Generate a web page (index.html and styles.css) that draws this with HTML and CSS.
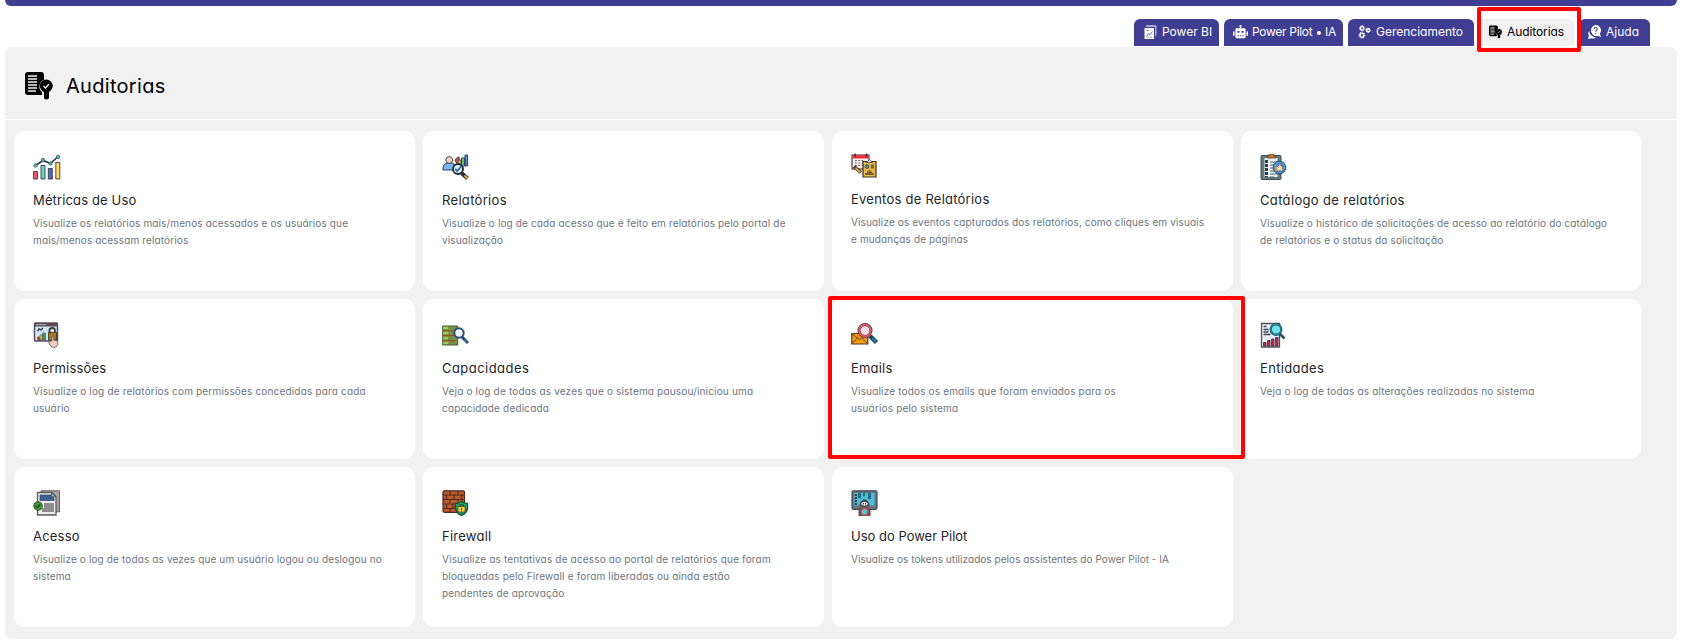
FILE: index.html
```html
<!DOCTYPE html>
<html lang="pt-BR">
<head>
<meta charset="utf-8">
<title>Auditorias</title>
<link rel="stylesheet" href="styles.css">
</head>
<body>
<svg class="defs" width="0" height="0">
  <symbol id="audit" viewBox="0 0 28 28">
    <path fill="currentColor" d="M3 0h13a3 3 0 0 1 3 3v5a7 7 0 0 0-2 12v3H3a3 3 0 0 1-3-3V3a3 3 0 0 1 3-3z"/>
    <path class="audit-lines" d="M3 4h9M3 7h9M3 10h9M3 13h9M3 16h9M3 19h8"/>
    <circle cx="21.3" cy="14" r="6.4" fill="currentColor"/>
    <path fill="currentColor" d="M19 18h5v7.500a2.500 2 0 0 1-5 0z"/>
    <path class="audit-lines" d="M18.500 14l2 2 3.500-4"/>
  </symbol>
</svg>
<header class="topbar"></header>
<nav class="tabs">
  <a class="tab t-bi"><svg class="ti" viewBox="0 0 12 14"><path fill="#a9a8d0" d="M2 0h9a1 1 0 0 1 1 1v9l-1.500 2V2H1z"/><path fill="#fff" d="M0 3h9.500v11H0z"/><path fill="none" stroke="#403e92" stroke-width=".8" d="M2 5.500h2M2 11.500l2-3 1.500 1 2.500-3M3 12.300h1M6 12.300h1.500"/></svg><span>Power BI</span></a>
  <a class="tab t-pilot"><svg class="ti wide" viewBox="0 0 14 13"><path fill="#fff" d="M6.300 1h1.400v2h2.800a1.300 1.300 0 0 1 1.300 1.300V11a1.300 1.300 0 0 1-1.300 1.300h-7A1.300 1.300 0 0 1 2.200 11V4.300A1.300 1.300 0 0 1 3.500 3h2.800zM0 6h1.400v4H0zM12.600 6H14v4h-1.400z"/><circle cx="7" cy="1" r="1" fill="#fff"/><path fill="#403e92" d="M4 5.500h2v1.800H4zM8 5.500h2v1.800H8zM4.200 9.500h1.300v.9H4.200zM6.400 9.500h1.300v.9H6.400zM8.600 9.500h1.300v.9H8.600z"/></svg><span>Power Pilot • IA</span></a>
  <a class="tab t-ger"><svg class="ti" viewBox="0 0 12 14"><g fill="none" stroke="#fff"><g stroke-width="1.400"><circle cx="3.600" cy="3.300" r="1.700"/><circle cx="9.600" cy="5.300" r="1.500"/><circle cx="3.400" cy="10.200" r="1.900"/></g><g stroke-width="1" stroke-dasharray="1 1"><circle cx="3.600" cy="3.300" r="2.700"/><circle cx="9.600" cy="5.300" r="2.200"/><circle cx="3.400" cy="10.200" r="3"/></g></g></svg><span>Gerenciamento</span></a>
  <a class="tab active t-aud"><svg class="ti"><use href="#audit"/></svg><span>Auditorias</span></a>
  <a class="tab t-aju"><svg class="ti" viewBox="0 0 12 13"><path fill="#fff" d="M7 0a5 5 0 0 1 4 8l1 3-3-.8A5 5 0 1 1 7 0z"/><path fill="#fff" d="M1.200 5.500A6 6 0 0 0 7.500 11.500 5 5 0 0 1 3 12.200L0 13l.8-3a4 4 0 0 1 .4-4.500z"/><path fill="none" stroke="#403e92" stroke-width="1" d="M5.600 3.800c0-2 3-2 3 0 0 1-1.500 1.200-1.500 2.400M7.100 7.200v1"/></svg><span>Ajuda</span></a>
  <span class="mark mark-tab"></span>
</nav>
<main class="panel">
  <div class="head"><svg class="head-icon"><use href="#audit"/></svg><h1>Auditorias</h1></div>
  <section class="grid">
    <article class="card">
      <svg class="icon" viewBox="0 0 28 26"><g stroke="#3b3a48" stroke-width=".9"><path fill="#e9566d" d="M.5 17.500h4v7.500h-4z"/><path fill="#6fd3c3" d="M8 11.500h4V25H8z"/><path fill="#4a6cae" d="M15.300 14.500h4V25h-4z"/><path fill="#ffd966" d="M22.800 8.500h4V25h-4z"/></g><path fill="none" stroke="#33324a" stroke-width="1.600" d="M2.500 11.500l7.500-5 7.500 3 7-6.500"/><g fill="#4fc3ac" stroke="#3b5560" stroke-width=".8"><circle cx="2.500" cy="11.500" r="1.700"/><circle cx="10" cy="6" r="1.700"/><circle cx="17.500" cy="9.500" r="1.700"/><circle cx="25" cy="3" r="1.700"/></g></svg>
      <h2 class="w-met">Métricas de Uso</h2>
      <p>Visualize os relatórios mais/menos acessados e os usuários que<br>mais/menos acessam relatórios</p>
    </article>
    <article class="card">
      <svg class="icon" viewBox="0 0 28 26"><g stroke="#34343c" stroke-width=".9"><path fill="#75b8f4" d="M1 16v-2a5 5 0 0 1 5-5h3a5 5 0 0 1 5 5v2z"/><circle cx="7.200" cy="6" r="3.400" fill="#f5d3bc"/><path fill="#e25563" d="M13 7a5 5 0 0 1 4-4v8z"/><path fill="#f2c84b" d="M16 6h3v6h-3z"/><path fill="#65bd83" d="M19.500 4h3v8h-3z"/><path fill="#498dcc" d="M23 1h2.600v11H23z"/></g><path stroke="#323238" stroke-width="4" d="M19.500 19l6 5.500"/><path stroke="#e9a34c" stroke-width="2" d="M22.500 21.500l3 3"/><circle cx="16" cy="15" r="5" fill="#d8edf8" stroke="#292a31" stroke-width="1.900"/><path fill="none" stroke="#2e68a0" stroke-width="1.800" d="M13.200 15l2 2 4-4.500"/></svg>
      <h2 class="w-rel">Relatórios</h2>
      <p>Visualize o log de cada acesso que é feito em relatórios pelo portal de<br>visualização</p>
    </article>
    <article class="card raised">
      <svg class="icon" viewBox="0 0 28 26"><path fill="#f4edf0" stroke="#342b32" stroke-width="1.100" d="M1 2h17v14H1z"/><path fill="#e6303c" d="M1.500 2h16v3.500h-16z"/><path stroke="#302a30" stroke-width="1.400" d="M4 .5v3M15.500.5v3"/><path fill="none" stroke="#775f72" stroke-width="1.200" stroke-dasharray="1.800 1.500" d="M4 7.500h9M4 10h9M4 12.500h9"/><path stroke="#493524" stroke-width="3.500" d="M3 13.500l7 6"/><path stroke="#ddaa3b" stroke-width="1.700" d="M4.500 15l5 4.300"/><path fill="#e8b84e" stroke="#3d3021" stroke-width="1.200" d="M12 8.500h13V24H12z"/><path fill="#d9e6ef" stroke="#3d3c43" stroke-width=".8" d="M15.500 9.500l3-3 3 3z"/><circle cx="16" cy="13.500" r="1.800" fill="#4d9da8" stroke="#344b4b"/><path fill="#79642e" d="M20 11.500h3v4h-3zM14 22v-2h2v-1.500h1.500V17h2v1.500H21V20h2v2z"/></svg>
      <h2 class="w-eve">Eventos de Relatórios</h2>
      <p>Visualize os eventos capturados dos relatórios, como cliques em visuais<br>e mudanças de páginas</p>
    </article>
    <article class="card">
      <svg class="icon" viewBox="0 0 28 26"><rect x="1" y="1.500" width="20" height="24" rx="1" fill="#64777c" stroke="#3d4d53"/><path fill="#eef1f3" d="M4.500 4h13v19h-13z"/><path fill="#c77732" stroke="#593921" stroke-width=".8" d="M7 4V2h2l.5-2h4l.5 2h2v2z"/><path stroke="#243b55" stroke-width="3" stroke-dasharray="3 1" d="M6.500 6v17"/><path stroke="#525d65" stroke-width="1.200" d="M10 8h8M10 11h5M10 14h4M10 17h5M10 20h8M10 23h4"/><circle cx="19.500" cy="13.500" r="6.300" fill="#4a9bde" stroke="#244f78"/><path fill="#f6d4bd" stroke="#51443f" stroke-width=".7" d="M16.500 17v-4l2-1 1-3q2 0 1.300 3h2v5z"/><path fill="#d9a52e" d="M15.500 12.500h1.600V17h-1.600z"/></svg>
      <h2 class="w-cat">Catálogo de relatórios</h2>
      <p>Visualize o histórico de solicitações de acesso ao relatório do catálogo<br>de relatórios e o status da solicitação</p>
    </article>
    <article class="card">
      <svg class="icon" viewBox="0 0 28 26"><rect x="1.500" y="1" width="23" height="18" rx=".7" fill="#cfe4f5" stroke="#4f4c59" stroke-width="1.400"/><path fill="#5b4851" d="M1.500 1h23v3.500h-23z"/><path stroke="#beb0bb" stroke-width="1" d="M3 2.700h10"/><path fill="none" stroke="#3b3a45" stroke-width="1.400" d="M4.500 9l1.500-2 2 1 2-2"/><path fill="#d64848" stroke="#3b3a45" stroke-width=".5" d="M4.500 15H7v3H4.500z"/><path fill="#e9c144" stroke="#3b3a45" stroke-width=".5" d="M7 13h2.300v5H7z"/><path fill="#369a6c" stroke="#3b3a45" stroke-width=".5" d="M9.500 11h3v7h-3z"/><path fill="none" stroke="#40362c" stroke-width="1.800" d="M16.500 11V8.500a2.700 2.700 0 0 1 5.400 0V10"/><path fill="#a87a20" stroke="#463724" stroke-width=".9" d="M15.500 10.500h8V18h-8z"/><path fill="#f0d0bc" stroke="#594b49" stroke-width=".8" d="M18.800 19v-4q1.200-1.300 2 0v3l4 1v3.500q-1 3-4 3t-4.500-3.500l-.7-2.500z"/></svg>
      <h2 class="w-per">Permissões</h2>
      <p class="loose">Visualize o log de relatórios com permissões concedidas para cada<br>usuário</p>
    </article>
    <article class="card">
      <svg class="icon" viewBox="0 0 28 26"><path fill="#759144" stroke="#495b33" d="M.7 4h15v19H.7z"/><path stroke="#99cc54" stroke-width="2.400" d="M1.200 6h5M1.200 11h5M1.200 16h5M1.200 21h5"/><path stroke="#a3512d" stroke-width="1.200" d="M1 8.600h14.500M1 13.600h14.500M1 18.600h14.500"/><path stroke="#293f55" stroke-width="3" d="M20 15l6 6"/><path stroke="#3979bb" stroke-width="1.700" d="M22.500 17.500l3 3"/><circle cx="17" cy="11" r="4.700" fill="#eef7ff" stroke="#294e7d" stroke-width="2"/></svg>
      <h2 class="w-cap">Capacidades</h2>
      <p class="loose">Veja o log de todas as vezes que o sistema pausou/iniciou uma<br>capacidade dedicada</p>
    </article>
    <article class="card">
      <svg class="icon" viewBox="0 0 28 26"><path fill="#f29b17" stroke="#503823" stroke-width="1.200" d="M.8 11.500h16V22H.8z"/><path fill="none" stroke="#694317" stroke-width="1" d="M1 12l7.500 5.500 8-5.500M1 21.500l5.500-5.500M16.500 21.500l-5-5"/><path stroke="#233d50" stroke-width="4.500" d="M19 14l6.500 6.500"/><path stroke="#26779e" stroke-width="2.500" d="M21 16l4 4"/><circle cx="14" cy="8.500" r="6" fill="#f3dce7" stroke="#5a3442" stroke-width="3"/><circle cx="14" cy="8.500" r="5.800" fill="none" stroke="#e85c63" stroke-width="1.800"/></svg>
      <h2 class="w-ema">Emails</h2>
      <p class="loose">Visualize todos os emails que foram enviados para os<br>usuários pelo sistema</p>
      <span class="mark mark-card"></span>
    </article>
    <article class="card">
      <svg class="icon" viewBox="0 0 28 26"><path fill="#e9edf8" stroke="#4e5259" stroke-width="1.300" d="M1.500 1.500h18V25h-18z"/><path stroke="#44454f" stroke-width="1.300" d="M3.500 4.500h3M3.500 7.500h5M3.500 10h5M3.500 12.500h7"/><g fill="#b62c4a" stroke="#4e273a" stroke-width=".8"><path d="M3.500 20.500H6V24H3.500zM7.500 18.500H10V24H7.500zM11.500 17H14v7h-2.500zM15.500 15.500H18V24h-2.500z"/></g><path stroke="#285462" stroke-width="2.600" d="M19.500 11.500l5 5"/><circle cx="16" cy="7.500" r="5.300" fill="#71e3ee" stroke="#245466" stroke-width="2.400"/><circle cx="16" cy="7.500" r="5.200" fill="none" stroke="#279ab0"/></svg>
      <h2 class="w-ent">Entidades</h2>
      <p class="loose">Veja o log de todas as alterações realizadas no sistema</p>
    </article>
    <article class="card">
      <svg class="icon" viewBox="0 0 28 26"><path fill="#a5a5a5" stroke="#616161" d="M8 .8h18.500v21H8z"/><path fill="#ececec" stroke="#5c5c5c" stroke-width="1.300" d="M4.500 2.500H19l4 4V25H4.500z"/><path fill="#3e6093" stroke="#2c4265" stroke-width=".7" d="M7 5h12l2 3v2.500H7z"/><path fill="#aaa" stroke="#4b4b4b" stroke-width=".8" d="M18.500 2.500V7H23z"/><path fill="#8d8d8d" d="M11 13h10v9H9v-4h2z"/><circle cx="5" cy="16" r="4.200" fill="#469b34" stroke="#294f28"/><path fill="none" stroke="#183d1b" stroke-width="1.300" d="M3 16l1.500 1.400L7.300 14.500"/></svg>
      <h2 class="w-ace">Acesso</h2>
      <p>Visualize o log de todas as vezes que um usuário logou ou deslogou no<br>sistema</p>
    </article>
    <article class="card">
      <svg class="icon" viewBox="0 0 28 26"><rect x="1" y=".8" width="21.500" height="21.500" rx="1.500" fill="#bd5b2d" stroke="#492a20" stroke-width="1.200"/><path fill="none" stroke="#4e2a20" stroke-width="1.100" d="M1 5h21.500M1 9.500h21.500M1 14h21.500M1 18.500h21.500M8 1v4M16 1v4M4.500 5v4.500M12 5v4.500M19.500 5v4.500M8 9.500V14M16 9.500V14M4.500 14v4.500M11 14v4.500M8 18.500V22"/><path fill="#21a767" stroke="#174d3b" stroke-width="1.300" d="M19.500 11.500q3 2 6 2v5q-1 5-6 7-5-2-6-7v-5q3 0 6-2z"/><path fill="none" stroke="#353724" stroke-width="1" d="M17.500 17v-2h4v2"/><path fill="#f3d23d" stroke="#37412e" stroke-width=".7" d="M16 16.500h7V22h-7z"/><path stroke="#3f3c24" d="M19.500 18v2.500"/></svg>
      <h2 class="w-fir">Firewall</h2>
      <p class="loose">Visualize as tentativas de acesso ao portal de relatórios que foram<br>bloqueadas pelo Firewall e foram liberadas ou ainda estão<br>pendentes de aprovação</p>
    </article>
    <article class="card">
      <svg class="icon" viewBox="0 0 28 26"><rect x="1" y=".8" width="25" height="18.500" rx="1.500" fill="#68777f" stroke="#3e484e" stroke-width="1.200"/><path fill="#48bedc" d="M3.500 3h20v12.500h-20z"/><path fill="#286880" d="M7 3h3v5H7zM12 3h2v3h-2zM17 3h3v6h-3z"/><path stroke="#2c3233" stroke-width="1.800" stroke-dasharray="2 1" d="M5 4v11"/><path fill="#4b565b" d="M7.500 19.500l3-3h6l3 3V26h-12z"/><path fill="#3f4548" d="M8.500 16q0-5 5-7 5 2 5 7z"/><ellipse cx="13.500" cy="13.800" rx="3.800" ry="2.400" fill="#efe7e8" stroke="#37383b"/><path stroke="#37383b" d="M12.300 13v1.500M14.700 13v1.500"/><circle cx="13.500" cy="21.800" r="3.800" fill="#5dc4d8" stroke="#b64739" stroke-width="1.800"/></svg>
      <h2>Uso do Power Pilot</h2>
      <p class="tight">Visualize os tokens utilizados pelos assistentes do Power Pilot - IA</p>
    </article>
  </section>
</main>
</body>
</html>
```
FILE: styles.css
```css
* { box-sizing: border-box; }
body { margin: 0; padding: 0 6px 0 5px; background: #fff; font-family: Inter, "Open Sans", sans-serif; font-feature-settings: "cv11"; overflow: hidden; }
.defs { position: absolute; }
.topbar { height: 6px; background: #403e92; border-radius: 0 0 7px 7px; }
.tabs { position: relative; display: flex; justify-content: flex-end; gap: 5px; height: 41px; padding: 13px 27px 1px 0; }
.tab { display: flex; align-items: center; gap: 5px; padding: 0 0 2px 10px; border-radius: 6px 6px 0 0; background: #403e92; color: #fff; font-size: 12px; line-height: 18px; white-space: nowrap; }
.tab.active { background: #f1f1f1; color: #000; letter-spacing: -.1px; }
.ti { width: 13px; height: 14px; flex: none; }
.ti.wide { width: 15px; }
.t-bi { width: 85px; }
.t-pilot { width: 119px; padding-left: 9px; gap: 4px; letter-spacing: -.3px; }
.t-ger { width: 126px; }
.t-aud { width: 95px; }
.t-aju { width: 71px; padding-left: 9px; }
.audit-lines { fill: none; stroke: #f1f1f1; stroke-width: 1.4; }
.mark { position: absolute; border: 4px solid #ff0505; border-radius: 2px; }
.mark-tab { left: 1472px; top: 1px; width: 104px; height: 45px; }
.mark-card { left: -4px; top: -3px; width: 417px; height: 163px; z-index: 2; }
.panel { height: 592px; background: #f1f1f1; border-radius: 7px; }
.head { display: flex; align-items: center; gap: 13px; height: 73px; padding: 6px 0 0 20px; border-bottom: 1px solid #fff; }
.head-icon { width: 28px; height: 28px; }
.head h1 { margin: 0; font-size: 20px; font-weight: 400; line-height: 30px; letter-spacing: .3px; }
.grid { display: grid; grid-template-columns: repeat(3, 401px) 1fr; grid-auto-rows: 160px; gap: 8px; padding: 11px 36px 0 9px; }
.card { position: relative; background: #fff; border-radius: 11px; padding: 23px 0 0 19px; }
.card.raised { padding-top: 22px; }
.icon { display: block; width: 28px; height: 26px; }
.card h2 { margin: 10px 0 0; font-size: 13px; line-height: 20px; font-weight: 400; color: #212529; white-space: nowrap; }
.card p { margin: 5px 0 0; font-size: 10px; line-height: 16.8px; letter-spacing: .135px; color: #6c757d; white-space: nowrap; }
.card p.loose { letter-spacing: .17px; }
.card p.tight { letter-spacing: .05px; }
.card .w-met { letter-spacing: .14px; }
.card .w-rel, .card .w-ent { letter-spacing: .32px; }
.card .w-eve, .card .w-fir { letter-spacing: .24px; }
.card .w-cat { letter-spacing: .34px; }
.card .w-per, .card .w-ace, .card .w-ema { letter-spacing: .2px; }
.card .w-cap { letter-spacing: .45px; }
```
